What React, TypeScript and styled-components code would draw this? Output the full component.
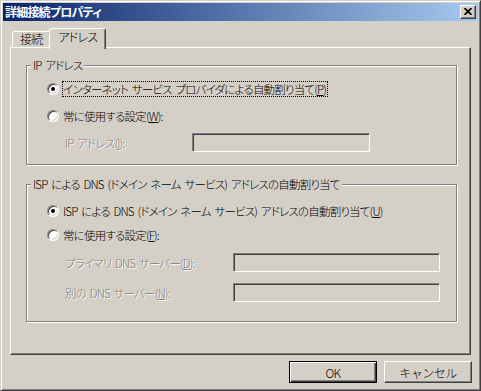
import styled, { createGlobalStyle } from 'styled-components';

const GlobalStyle = createGlobalStyle`
  html, body {
    margin: 0;
    padding: 0;
    background: #d4d0c8;
  }
  body {
    font-family: "Noto Sans CJK JP", "Noto Sans", sans-serif;
    font-size: 11.5px;
    font-weight: 300;
    font-feature-settings: "palt";
    letter-spacing: -0.8px;
    word-spacing: 2px;
    color: #000;
  }
`;

const App = () => {
  return (
    <>
      <GlobalStyle />
      <Window>
        <TitleBar>
          <Title>詳細接続プロパティ</Title>
          <CloseButton>
            <svg width="8" height="7" viewBox="0 0 8 7">
              <path d="M0.5 0 L7.5 7 M7.5 0 L0.5 7" stroke="#000" strokeWidth="1.7" />
            </svg>
          </CloseButton>
        </TitleBar>

        <Body>
          <TabStrip>
            <Tab>接続</Tab>
            <Tab $active>アドレス</Tab>
          </TabStrip>

          <Panel>
            <Group $bottom={12}>
              <Legend>IP アドレス</Legend>
              <RadioRow $top={8}>
                <Radio $checked />
                <RadioText $focus>
                  インターネット サービス プロバイダによる自動割り当て(<u>P</u>)
                </RadioText>
              </RadioRow>
              <RadioRow $top={11}>
                <Radio />
                <RadioText>
                  常に使用する設定(<u>W</u>):
                </RadioText>
              </RadioRow>
              <FieldRow $top={9} $label={127} $input={178}>
                <FieldLabel>
                  IP アドレス(<u>I</u>):
                </FieldLabel>
                <Edit disabled />
              </FieldRow>
            </Group>

            <Group $bottom={19}>
              <Legend>ISP による DNS (ドメイン ネーム サービス) アドレスの自動割り当て</Legend>
              <RadioRow $top={11}>
                <Radio $checked />
                <RadioText>
                  ISP による DNS (ドメイン ネーム サービス) アドレスの自動割り当て(<u>U</u>)
                </RadioText>
              </RadioRow>
              <RadioRow $top={8}>
                <Radio />
                <RadioText>
                  常に使用する設定(<u>F</u>):
                </RadioText>
              </RadioRow>
              <FieldRow $top={10} $label={168} $input={207}>
                <FieldLabel>
                  プライマリ DNS サーバー(<u>D</u>):
                </FieldLabel>
                <Edit disabled />
              </FieldRow>
              <FieldRow $top={11} $label={168} $input={207}>
                <FieldLabel>
                  別の DNS サーバー(<u>N</u>):
                </FieldLabel>
                <Edit disabled />
              </FieldRow>
            </Group>
          </Panel>

          <ButtonRow>
            <Button $default>OK</Button>
            <Button>キャンセル</Button>
          </ButtonRow>
        </Body>
      </Window>
    </>
  );
};

export default App;

const Window = styled.div`
  box-sizing: border-box;
  width: 481px;
  height: 391px;
  background: #d4d0c8;
  border: 1px solid;
  border-color: #d4d0c8 #404040 #404040 #d4d0c8;
  box-shadow: inset 1px 1px 0 #fff, inset -1px -1px 0 #808080;
  padding: 2px;
  display: flex;
  flex-direction: column;
`;

const TitleBar = styled.div`
  height: 18px;
  display: flex;
  align-items: center;
  justify-content: space-between;
  background: linear-gradient(to right, #0a246a, #a6caf0);
  padding: 0 2px;
`;

const Title = styled.div`
  color: #fff;
  font-size: 12px;
  font-weight: bold;
  line-height: 18px;
  white-space: nowrap;
`;

const CloseButton = styled.div`
  box-sizing: border-box;
  width: 16px;
  height: 14px;
  background: #d4d0c8;
  border: 1px solid;
  border-color: #fff #404040 #404040 #fff;
  box-shadow: inset -1px -1px 0 #808080;
  display: flex;
  align-items: center;
  justify-content: center;
  padding: 0 1px 1px 0;

  svg {
    display: block;
  }
`;

const Body = styled.div`
  padding: 7px 7px 0 7px;
  display: flex;
  flex-direction: column;
`;

const TabStrip = styled.div`
  height: 19px;
  display: flex;
  align-items: flex-end;
  padding-left: 2px;
  position: relative;
  z-index: 1;
`;

const Tab = styled.div<{ $active?: boolean }>`
  box-sizing: border-box;
  height: ${({ $active }) => ($active ? 21 : 16)}px;
  margin-bottom: ${({ $active }) => ($active ? -2 : 0)}px;
  margin-left: ${({ $active }) => ($active ? -2 : 0)}px;
  padding: ${({ $active }) => ($active ? '1px 8px 0 8px' : '0 8px 0 7px')};
  font-size: 12px;
  background: #d4d0c8;
  border: 1px solid;
  border-bottom: none;
  border-color: #fff #404040 transparent #fff;
  box-shadow: inset -1px 0 0 #808080;
  border-radius: 3px 3px 0 0;
  line-height: 14px;
  white-space: nowrap;
  position: relative;
  z-index: ${({ $active }) => ($active ? 2 : 1)};
`;

const Panel = styled.div`
  box-sizing: border-box;
  height: 308px;
  border: 1px solid;
  border-color: #fff #404040 #404040 #fff;
  box-shadow: inset -1px -1px 0 #808080;
  padding: 9px 13px 0 15px;
  display: flex;
  flex-direction: column;
  gap: 11px;
`;

const Group = styled.fieldset<{ $bottom: number }>`
  margin: 0;
  padding: 0 0 ${({ $bottom }) => $bottom}px 0;
  min-inline-size: 0;
  border: 1px solid #808080;
  box-shadow: inset 1px 1px 0 #fff, 1px 1px 0 #fff;
`;

const Legend = styled.legend`
  margin-left: 4px;
  padding: 0 2px;
  line-height: 16px;
  background: #d4d0c8;
  white-space: nowrap;
`;

const RadioRow = styled.div<{ $top: number }>`
  margin-top: ${({ $top }) => $top}px;
  padding-left: 20px;
  height: 16px;
  display: flex;
  align-items: center;
  gap: 3px;
`;

const Radio = styled.span<{ $checked?: boolean }>`
  box-sizing: border-box;
  width: 12px;
  height: 12px;
  flex: none;
  border-radius: 50%;
  border: 1px solid;
  border-color: #808080 #fff #fff #808080;
  box-shadow: inset 1px 1px 0 #404040, inset -1px -1px 0 #d4d0c8;
  background: #fff;
  display: flex;
  align-items: center;
  justify-content: center;

  &::after {
    content: '';
    width: 4px;
    height: 4px;
    border-radius: 50%;
    background: ${({ $checked }) => ($checked ? '#000' : 'transparent')};
  }
`;

const RadioText = styled.span<{ $focus?: boolean }>`
  padding: 0 2px 0 1px;
  line-height: 16px;
  white-space: nowrap;
  outline: ${({ $focus }) => ($focus ? '1px dotted #000' : 'none')};
  outline-offset: -1px;
`;

const FieldRow = styled.div<{ $top: number; $label: number; $input: number }>`
  margin-top: ${({ $top }) => $top}px;
  padding-left: 38px;
  display: grid;
  grid-template-columns: ${({ $label }) => $label}px ${({ $input }) => $input}px;
  align-items: center;
  height: 19px;
`;

const FieldLabel = styled.span`
  color: #808080;
  text-shadow: 1px 1px 0 #fff;
  line-height: 16px;
  white-space: nowrap;
`;

const Edit = styled.input`
  box-sizing: border-box;
  appearance: none;
  margin: 0;
  padding: 0;
  width: 100%;
  height: 19px;
  border: 1px solid;
  border-color: #808080 #fff #fff #808080;
  box-shadow: inset 1px 1px 0 #404040, inset -1px -1px 0 #d4d0c8;
  background: #d4d0c8;
  outline: none;
`;

const ButtonRow = styled.div`
  margin: 6px -1px 0 0;
  display: flex;
  justify-content: flex-end;
  gap: 7px;
`;

const Button = styled.button<{ $default?: boolean }>`
  box-sizing: border-box;
  width: 88px;
  height: 22px;
  margin: 0;
  padding: 0;
  font-family: inherit;
  font-size: 12px;
  font-weight: 300;
  letter-spacing: -0.5px;
  color: #000;
  background: #d4d0c8;
  border: 1px solid;
  border-color: ${({ $default }) =>
    $default ? '#000' : '#fff #404040 #404040 #fff'};
  box-shadow: ${({ $default }) =>
    $default
      ? 'inset 1px 1px 0 #fff, inset -1px -1px 0 #404040, inset -2px -2px 0 #808080'
      : 'inset -1px -1px 0 #808080'};
`;
